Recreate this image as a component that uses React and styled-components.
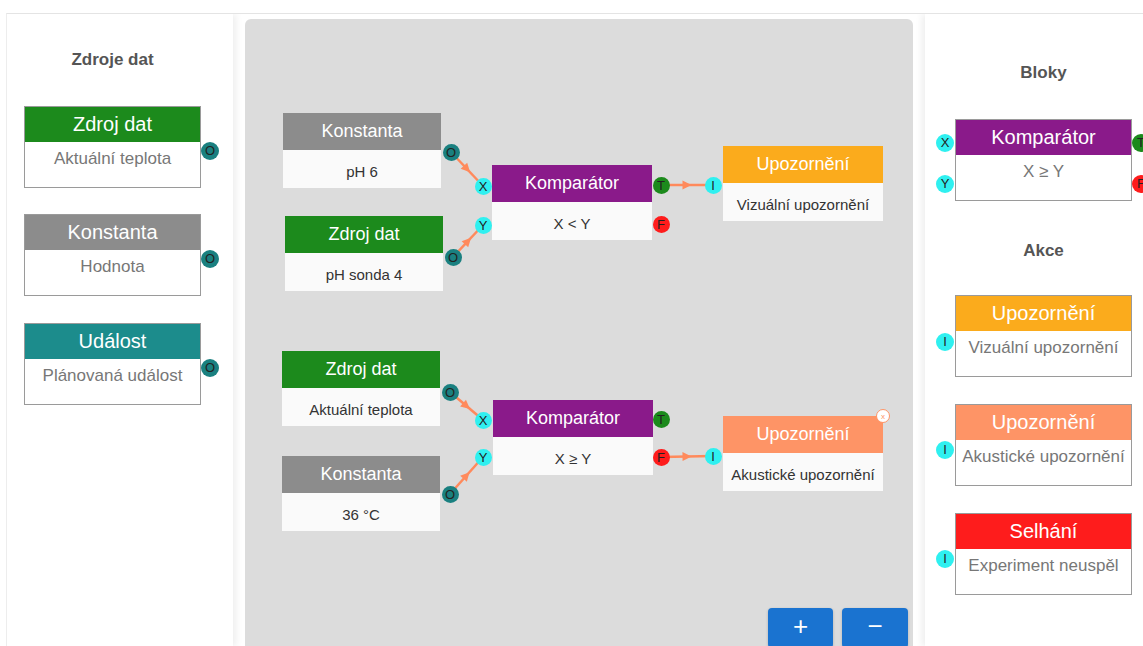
import React from 'react';
import styled, { createGlobalStyle } from 'styled-components';

const GlobalStyle = createGlobalStyle`
  html, body {
    margin: 0;
    padding: 0;
    overflow: hidden;
    background: #fff;
    font-family: "Liberation Sans", Arial, sans-serif;
  }
`;

const COLORS = {
  green: '#1c8a1c',
  gray: '#8c8c8c',
  teal: '#1c8c8c',
  purple: '#8a1a8a',
  amber: '#fbab1c',
  salmon: '#fe9466',
  red: '#fe1c1c',
};

const PORT_COLORS = {
  O: '#1a8080',
  X: '#2ff0f0',
  Y: '#2ff0f0',
  I: '#2ff0f0',
  T: '#1c8a1c',
  F: '#fe1c1c',
};

const palette = [
  {
    head: 'Zdroj dat', body: 'Aktuální teplota', color: COLORS.green,
    ports: [{ l: 'O', side: 'right', top: 35 }],
  },
  {
    head: 'Konstanta', body: 'Hodnota', color: COLORS.gray,
    ports: [{ l: 'O', side: 'right', top: 35 }],
  },
  {
    head: 'Událost', body: 'Plánovaná událost', color: COLORS.teal,
    ports: [{ l: 'O', side: 'right', top: 35 }],
  },
];

const blocks = [
  {
    head: 'Komparátor', body: 'X ≥ Y', color: COLORS.purple,
    ports: [
      { l: 'X', side: 'left', top: 14 },
      { l: 'Y', side: 'left', top: 55 },
      { l: 'T', side: 'right', top: 14 },
      { l: 'F', side: 'right', top: 55 },
    ],
  },
];

const actions = [
  { head: 'Upozornění', body: 'Vizuální upozornění', color: COLORS.amber, ports: [{ l: 'I', side: 'left', top: 37 }] },
  { head: 'Upozornění', body: 'Akustické upozornění', color: COLORS.salmon, ports: [{ l: 'I', side: 'left', top: 36 }] },
  { head: 'Selhání', body: 'Experiment neuspěl', color: COLORS.red, ports: [{ l: 'I', side: 'left', top: 36 }] },
];

// canvas coordinates (relative to the grey area)
const nodes = [
  { x: 38, y: 94, w: 158, head: 'Konstanta', body: 'pH 6', color: COLORS.gray, ports: [{ l: 'O', x: 168, y: 39 }] },
  { x: 40, y: 197, w: 158, head: 'Zdroj dat', body: 'pH sonda 4', color: COLORS.green, ports: [{ l: 'O', x: 168, y: 41 }] },
  {
    x: 247, y: 146, w: 160, head: 'Komparátor', body: 'X < Y', color: COLORS.purple,
    ports: [{ l: 'X', x: -9, y: 21 }, { l: 'Y', x: -9, y: 60 }, { l: 'T', x: 169, y: 20 }, { l: 'F', x: 169, y: 59 }],
  },
  { x: 478, y: 127, w: 160, head: 'Upozornění', body: 'Vizuální upozornění', color: COLORS.amber, ports: [{ l: 'I', x: -10, y: 39 }] },
  { x: 37, y: 332, w: 158, head: 'Zdroj dat', body: 'Aktuální teplota', color: COLORS.green, ports: [{ l: 'O', x: 168, y: 41 }] },
  { x: 37, y: 437, w: 158, head: 'Konstanta', body: '36 °C', color: COLORS.gray, ports: [{ l: 'O', x: 168, y: 38 }] },
  {
    x: 248, y: 381, w: 160, head: 'Komparátor', body: 'X ≥ Y', color: COLORS.purple,
    ports: [{ l: 'X', x: -10, y: 20 }, { l: 'Y', x: -10, y: 57 }, { l: 'T', x: 168, y: 19 }, { l: 'F', x: 168, y: 57 }],
  },
  {
    x: 478, y: 397, w: 160, head: 'Upozornění', body: 'Akustické upozornění', color: COLORS.salmon, closable: true,
    ports: [{ l: 'I', x: -10, y: 40 }],
  },
];

const edges = [
  [206, 133, 238, 167],
  [208, 238, 238, 206],
  [416, 166, 468, 166],
  [205, 373, 238, 401],
  [205, 475, 238, 438],
  [416, 438, 468, 437],
];

const Page = styled.div`
  padding: 13px 0 0 6px;
`;

const Frame = styled.div`
  display: flex;
  height: 633px;
  border-top: 1px solid #e4e4e4;
  border-left: 1px solid #ededed;
  overflow: hidden;
`;

const Panel = styled.aside`
  flex-shrink: 0;
  width: ${(p) => p.$width}px;
  box-sizing: border-box;
  padding-left: ${(p) => p.$pad}px;
  background: #fff;
  box-shadow: ${(p) => (p.$side === 'left' ? '3px 0 7px rgba(0,0,0,0.07)' : '-3px 0 7px rgba(0,0,0,0.07)')};
  margin-left: ${(p) => (p.$side === 'left' ? 0 : 12)}px;
  display: flex;
  flex-direction: column;
`;

const Column = styled.div`
  width: 177px;
  display: flex;
  flex-direction: column;
`;

const Title = styled.h3`
  margin: ${(p) => p.$mt}px 0 ${(p) => p.$mb}px;
  height: 20px;
  line-height: 20px;
  text-align: center;
  font-size: 17px;
  font-weight: bold;
  color: #555;
  white-space: nowrap;
`;

const Card = styled.div`
  position: relative;
  width: 177px;
  height: 82px;
  box-sizing: border-box;
  border: 1px solid #9a9a9a;
  margin-bottom: ${(p) => p.$gap}px;
  background: #fff;
`;

const CardHead = styled.div`
  height: 35px;
  line-height: 35px;
  background: ${(p) => p.$color};
  color: #fff;
  font-size: 20px;
  text-align: center;
  white-space: nowrap;
`;

const CardBody = styled.div`
  padding-top: 7px;
  line-height: 20px;
  font-size: 17px;
  color: #777;
  text-align: center;
  white-space: nowrap;
`;

const Port = styled.span`
  position: absolute;
  width: ${(p) => p.$size}px;
  height: ${(p) => p.$size}px;
  border-radius: 50%;
  background: ${(p) => p.$color};
  color: #222;
  font-size: 13px;
  line-height: ${(p) => p.$size}px;
  text-align: center;
  font-family: "Liberation Sans", Arial, sans-serif;
  z-index: 3;
`;

const Canvas = styled.main`
  position: relative;
  flex-shrink: 0;
  width: 668px;
  margin: 5px 0 0 12px;
  background: #dcdcdc;
  border-radius: 6px 6px 0 0;
`;

const Wires = styled.svg`
  position: absolute;
  left: 0;
  top: 0;
  z-index: 1;
`;

const Node = styled.div`
  position: absolute;
  z-index: 2;
  background: #fafafa;
`;

const NodeHead = styled.div`
  height: 37px;
  line-height: 37px;
  background: ${(p) => p.$color};
  color: #fff;
  font-size: 18px;
  text-align: center;
  white-space: nowrap;
`;

const NodeBody = styled.div`
  height: 38px;
  box-sizing: border-box;
  padding-top: 12px;
  line-height: 20px;
  font-size: 15px;
  color: #333;
  text-align: center;
  white-space: nowrap;
`;

const Close = styled.span`
  position: absolute;
  right: -7px;
  top: -7px;
  width: 12px;
  height: 12px;
  border-radius: 50%;
  border: 1px solid #fe9466;
  background: #fff;
  color: #fe9466;
  font-size: 8px;
  line-height: 14px;
  text-align: center;
  z-index: 3;
`;

const Zoom = styled.div`
  position: absolute;
  top: 589px;
  right: 5px;
  display: flex;
  gap: 9px;
  z-index: 4;
`;

const ZoomButton = styled.button`
  width: 66px;
  height: 40px;
  border: none;
  border-radius: 4px;
  background: #1a73d0;
  color: #fff;
  font-size: 26px;
  font-family: "Liberation Sans", Arial, sans-serif;
  line-height: 36px;
  padding: 0 0 4px;
  box-shadow: 0 1px 3px rgba(0,0,0,0.2);
`;

const PaletteCard = ({ item, gap }) => (
  <Card $gap={gap}>
    <CardHead $color={item.color}>{item.head}</CardHead>
    <CardBody>{item.body}</CardBody>
    {item.ports.map((p) => (
      <Port
        key={p.l}
        $size={18}
        $color={PORT_COLORS[p.l]}
        style={p.side === 'right' ? { right: -19, top: p.top } : { left: -20, top: p.top }}
      >
        {p.l}
      </Port>
    ))}
  </Card>
);

const arrowHead = (x1, y1, x2, y2) => {
  const mx = (x1 + x2) / 2;
  const my = (y1 + y2) / 2;
  const a = Math.atan2(y2 - y1, x2 - x1);
  const len = 9;
  const half = 4.5;
  const tipX = mx + Math.cos(a) * len / 2;
  const tipY = my + Math.sin(a) * len / 2;
  const bx = mx - Math.cos(a) * len / 2;
  const by = my - Math.sin(a) * len / 2;
  const px = -Math.sin(a) * half;
  const py = Math.cos(a) * half;
  return `${tipX},${tipY} ${bx + px},${by + py} ${bx - px},${by - py}`;
};

const App = () => (
  <>
    <GlobalStyle />
    <Page>
      <Frame>
        <Panel $side="left" $width={226} $pad={17}>
          <Column>
            <Title $mt={36} $mb={36}>Zdroje dat</Title>
            {palette.map((item, i) => (
              <PaletteCard key={i} item={item} gap={i === 0 ? 26 : 27} />
            ))}
          </Column>
        </Panel>

        <Canvas>
          <Wires width="668" height="628">
            {edges.map(([x1, y1, x2, y2], i) => (
              <g key={i}>
                <line x1={x1} y1={y1} x2={x2} y2={y2} stroke="#ff8a5c" strokeWidth="2.5" />
                <polygon points={arrowHead(x1, y1, x2, y2)} fill="#ff8a5c" />
              </g>
            ))}
          </Wires>
          {nodes.map((n, i) => (
            <Node key={i} style={{ left: n.x, top: n.y, width: n.w }}>
              <NodeHead $color={n.color}>{n.head}</NodeHead>
              <NodeBody>{n.body}</NodeBody>
              {n.ports.map((p) => (
                <Port
                  key={p.l}
                  $size={17}
                  $color={PORT_COLORS[p.l]}
                  style={{ left: p.x - 8.5, top: p.y - 8.5 }}
                >
                  {p.l}
                </Port>
              ))}
              {n.closable && <Close>x</Close>}
            </Node>
          ))}
          <Zoom>
            <ZoomButton style={{ width: 65 }}>+</ZoomButton>
            <ZoomButton>−</ZoomButton>
          </Zoom>
        </Canvas>

        <Panel $side="right" $width={236} $pad={30}>
          <Column>
            <Title $mt={49} $mb={36}>Bloky</Title>
            {blocks.map((item, i) => (
              <PaletteCard key={i} item={item} gap={0} />
            ))}
            <Title $mt={40} $mb={34}>Akce</Title>
            {actions.map((item, i) => (
              <PaletteCard key={i} item={item} gap={27} />
            ))}
          </Column>
        </Panel>
      </Frame>
    </Page>
  </>
);

export default App;
